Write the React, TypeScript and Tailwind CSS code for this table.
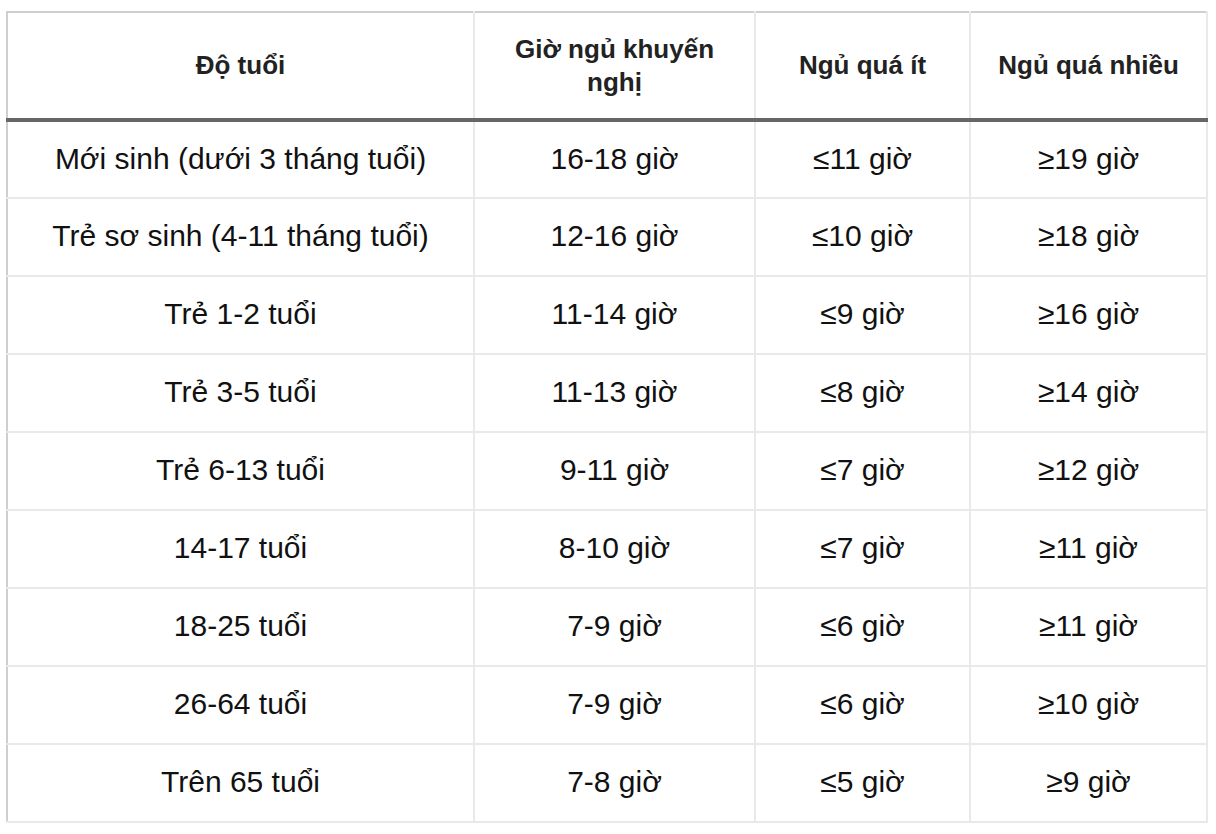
const HEADERS = ['Độ tuổi', 'Giờ ngủ khuyến nghị', 'Ngủ quá ít', 'Ngủ quá nhiều'];

const ROWS: [string, string, string, string][] = [
  ['Mới sinh (dưới 3 tháng tuổi)', '16-18 giờ', '≤11 giờ', '≥19 giờ'],
  ['Trẻ sơ sinh (4-11 tháng tuổi)', '12-16 giờ', '≤10 giờ', '≥18 giờ'],
  ['Trẻ 1-2 tuổi', '11-14 giờ', '≤9 giờ', '≥16 giờ'],
  ['Trẻ 3-5 tuổi', '11-13 giờ', '≤8 giờ', '≥14 giờ'],
  ['Trẻ 6-13 tuổi', '9-11 giờ', '≤7 giờ', '≥12 giờ'],
  ['14-17 tuổi', '8-10 giờ', '≤7 giờ', '≥11 giờ'],
  ['18-25 tuổi', '7-9 giờ', '≤6 giờ', '≥11 giờ'],
  ['26-64 tuổi', '7-9 giờ', '≤6 giờ', '≥10 giờ'],
  ['Trên 65 tuổi', '7-8 giờ', '≤5 giờ', '≥9 giờ'],
];

export default function App() {
  return (
    <div className="min-h-screen bg-white pl-[6px] pt-[11px] font-['Liberation_Sans',Arial,sans-serif]">
      <table className="w-[1200px] table-fixed border-collapse border-t-2 border-l-2 border-t-[#cfcfcf] border-l-[#cfcfcf]">
        <colgroup>
          <col className="w-[467px]" />
          <col className="w-[281px]" />
          <col className="w-[215px]" />
          <col className="w-[237px]" />
        </colgroup>
        <thead>
          <tr className="h-[108px] border-b-4 border-b-[#666666]">
            {HEADERS.map((h) => (
              <th
                key={h}
                className="border-2 border-t-0 border-l-0 border-[#e9e9e9] border-b-[#666666] px-5 text-center align-middle text-[26px] leading-[33px] font-bold text-[#222222]"
              >
                {h}
              </th>
            ))}
          </tr>
        </thead>
        <tbody>
          {ROWS.map((row) => (
            <tr key={row[0]} className="h-[78px]">
              {row.map((cell, i) => (
                <td
                  key={i}
                  className="border-2 border-t-0 border-l-0 border-[#e9e9e9] px-5 pb-[2px] text-center align-middle text-[30px] leading-[36px] text-[#111111]"
                >
                  {cell}
                </td>
              ))}
            </tr>
          ))}
        </tbody>
      </table>
    </div>
  );
}
